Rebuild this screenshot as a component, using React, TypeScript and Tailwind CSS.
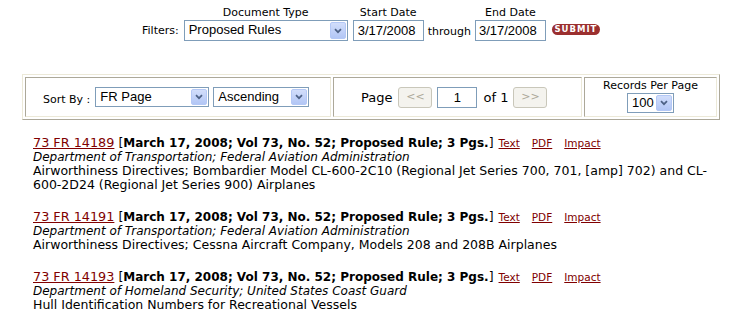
import type { ReactNode } from "react"

const entries = [
  {
    id: "73 FR 14189",
    agency: "Department of Transportation; Federal Aviation Administration",
    title:
      "Airworthiness Directives; Bombardier Model CL-600-2C10 (Regional Jet Series 700, 701, [amp] 702) and CL-600-2D24 (Regional Jet Series 900) Airplanes",
  },
  {
    id: "73 FR 14191",
    agency: "Department of Transportation; Federal Aviation Administration",
    title: "Airworthiness Directives; Cessna Aircraft Company, Models 208 and 208B Airplanes",
  },
  {
    id: "73 FR 14193",
    agency: "Department of Homeland Security; United States Coast Guard",
    title: "Hull Identification Numbers for Recreational Vessels",
  },
]

function Arrow() {
  return (
    <div className="m-[1px] flex w-[16px] items-center justify-center self-stretch rounded-[2px] border border-[#b4c8f6] bg-gradient-to-b from-[#d2defb] to-[#b2c6f5]">
      <svg width="8" height="6" viewBox="0 0 8 6">
        <path d="M1 1.2 L4 4.2 L7 1.2" fill="none" stroke="#4d6185" strokeWidth="1.7" />
      </svg>
    </div>
  )
}

function Select({ value, className }: { value: string; className: string }) {
  return (
    <div className={"flex items-stretch border border-[#7f9db9] bg-white " + className}>
      <span className="flex-1 truncate pl-[4px] text-[13px] leading-[18px] text-black">{value}</span>
      <Arrow />
    </div>
  )
}

function Input({ value, className }: { value: string; className: string }) {
  return (
    <div className={"border border-[#7f9db9] bg-white text-[13px] leading-[19px] text-black " + className}>
      {value}
    </div>
  )
}

function Field({ label, children }: { label: string; children: ReactNode }) {
  return (
    <div className="flex flex-col items-center">
      <span className="h-[14px] text-[11px] leading-[14px]">{label}</span>
      {children}
    </div>
  )
}

function PageBtn({ children }: { children: ReactNode }) {
  return (
    <div className="flex h-[21px] w-[34px] items-center justify-center rounded-[3px] border border-[#c9c7ba] bg-[#f4f3ee] text-[11px] text-[#aca899]">
      {children}
    </div>
  )
}

export default function App() {
  return (
    <div className="h-[318px] w-[740px] overflow-hidden bg-white font-['DejaVu_Sans',Verdana,sans-serif] text-black">
      {/* filters */}
      <div className="flex items-end pl-[142px] pt-[6px] [&_.ctl]:font-['Liberation_Sans',Arial,sans-serif]">
        <span className="mb-[3px] mr-[5px] text-[11px] leading-[14px]">Filters:</span>
        <Field label="Document Type">
          <Select value="Proposed Rules" className="ctl h-[21px] w-[164px]" />
        </Field>
        <div className="ml-[5px]">
          <Field label="Start Date">
            <Input value="3/17/2008" className="ctl h-[21px] w-[71px] pl-[4px]" />
          </Field>
        </div>
        <span className="mx-[4px] mb-[2px] text-[11px] leading-[14px]">through</span>
        <Field label="End Date">
          <Input value="3/17/2008" className="ctl h-[21px] w-[71px] pl-[3px]" />
        </Field>
        <button className="mb-[6px] ml-[6px] h-[11px] w-[48px] rounded-full bg-[#9b2f2f] text-[8.5px] font-bold leading-[11px] tracking-[1px] text-white">
          SUBMIT
        </button>
      </div>

      {/* toolbar */}
      <div className="ml-[22px] mt-[33px] flex w-[698px] gap-[2px] border border-[#ece9d8] border-b-[#aca899] border-r-[#aca899] p-[2px] [&_.ctl]:font-['Liberation_Sans',Arial,sans-serif]">
        <div className="flex h-[40px] w-[306px] items-center border border-[#aca899] border-b-[#ece9d8] border-r-[#ece9d8] pl-[17px]">
          <span className="mr-[5px] mt-[6px] text-[11px]">Sort By :</span>
          <Select value="FR Page" className="ctl h-[20px] w-[114px]" />
          <Select value="Ascending" className="ctl ml-[4px] h-[20px] w-[96px]" />
        </div>
        <div className="flex h-[40px] w-[249px] items-center border border-[#aca899] border-b-[#ece9d8] border-r-[#ece9d8] pl-[27px]">
          <span className="mr-[6px] mt-[2px] text-[13px]">Page</span>
          <PageBtn>&lt;&lt;</PageBtn>
          <Input value="1" className="ctl ml-[5px] h-[21px] w-[40px] text-center" />
          <span className="ml-[6px] mr-[5px] mt-[2px] text-[13px]">of 1</span>
          <PageBtn>&gt;&gt;</PageBtn>
        </div>
        <div className="flex h-[40px] flex-1 flex-col items-center border border-[#aca899] border-b-[#ece9d8] border-r-[#ece9d8] pt-[1px]">
          <span className="text-[11px] leading-[14px]">Records Per Page</span>
          <Select value="100" className="ctl h-[20px] w-[47px]" />
        </div>
      </div>

      {/* results */}
      <div className="mt-[16px] pl-[33px] pr-[20px] text-[12.5px] leading-[14px]">
        {entries.map((e) => (
          <div key={e.id} className="mb-[18px]">
            <div>
              <a className="text-[12.8px] text-[#800000] underline">{e.id}</a>{" "}
              [<b className="text-[12px]">March 17, 2008; Vol 73, No. 52; Proposed Rule; 3 Pgs.</b>]
              <a className="ml-[5px] text-[10.5px] text-[#800000] underline">Text</a>
              <a className="ml-[12px] text-[10.5px] text-[#800000] underline">PDF</a>
              <a className="ml-[12px] text-[10.5px] text-[#800000] underline">Impact</a>
            </div>
            <div className="text-[12px] italic">{e.agency}</div>
            <div>{e.title}</div>
          </div>
        ))}
      </div>
    </div>
  )
}
